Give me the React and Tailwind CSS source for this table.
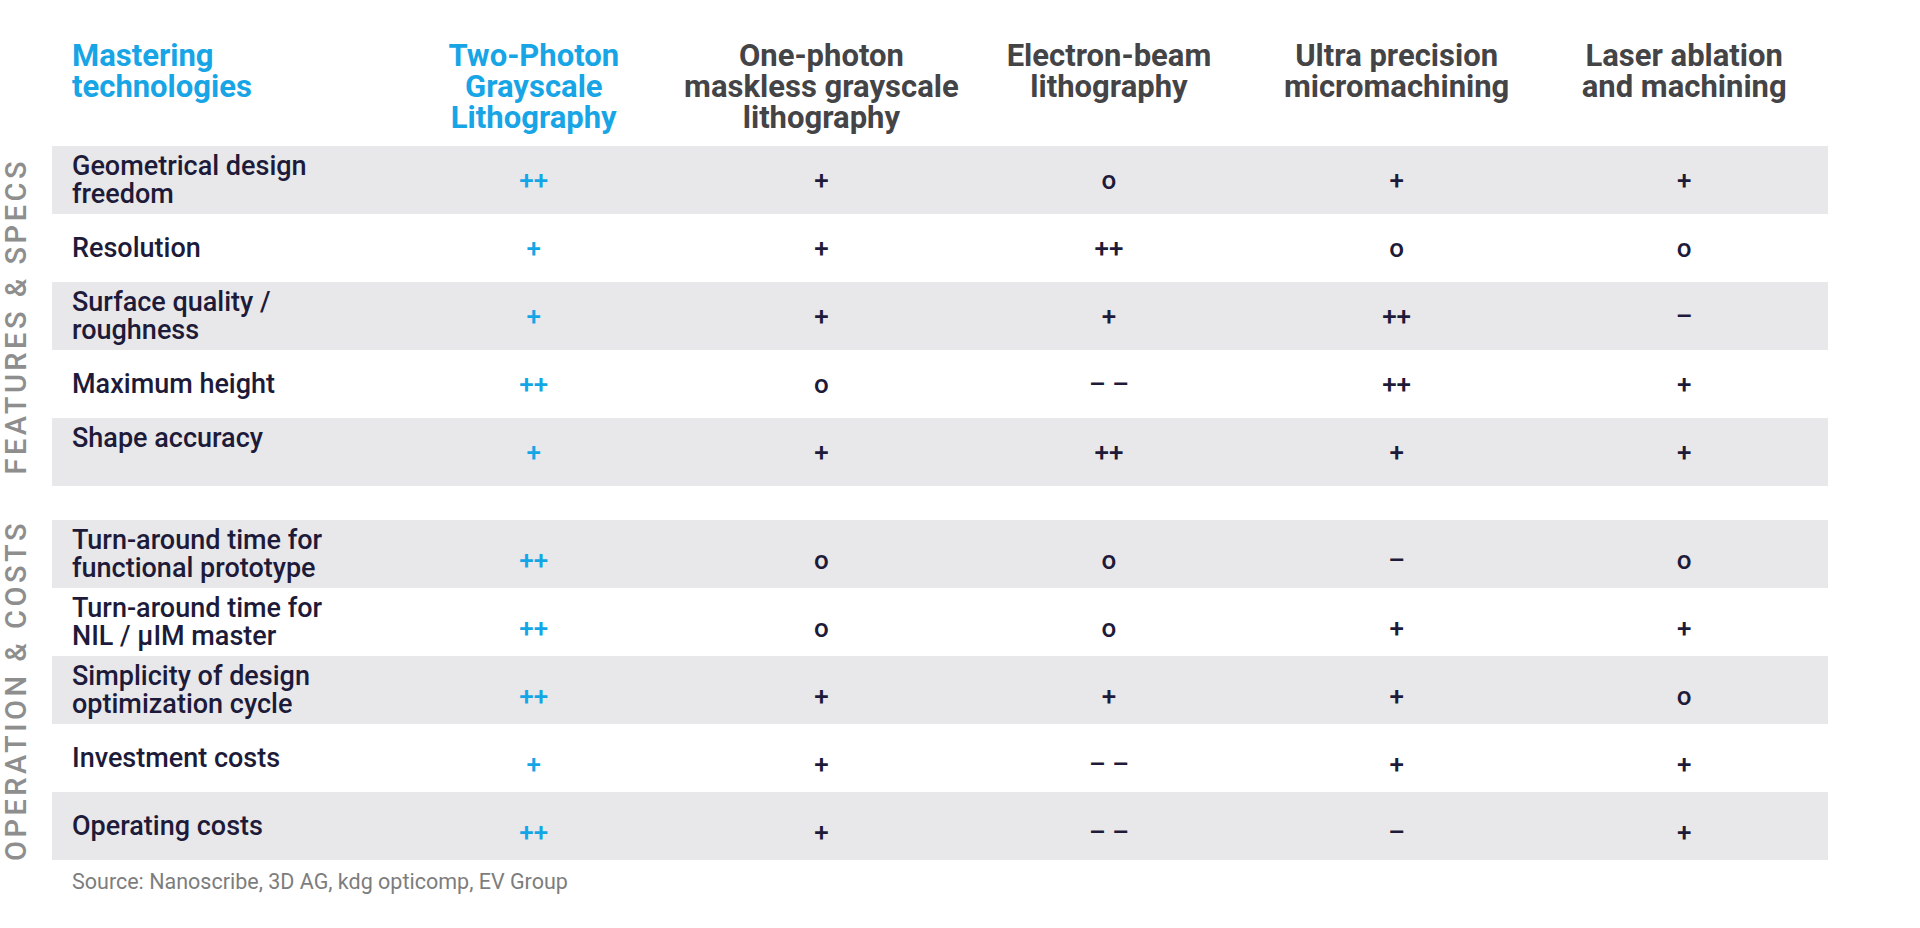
import React from "react";

const COLUMNS = [
    { lines: ["Two-Photon", "Grayscale", "Lithography"], accent: true },
    { lines: ["One-photon", "maskless grayscale", "lithography"] },
    { lines: ["Electron-beam", "lithography"] },
    { lines: ["Ultra precision", "micromachining"] },
    { lines: ["Laser ablation", "and machining"] },
];

const FEATURES = [
    { label: ["Geometrical design", "freedom"], values: ["++", "+", "o", "+", "+"] },
    { label: ["Resolution"], values: ["+", "+", "++", "o", "o"] },
    { label: ["Surface quality /", "roughness"], values: ["+", "+", "+", "++", "–"] },
    { label: ["Maximum height"], values: ["++", "o", "– –", "++", "+"] },
    { label: ["Shape accuracy"], values: ["+", "+", "++", "+", "+"], raised: true },
];

const OPERATION = [
    { label: ["Turn-around time for", "functional prototype"], values: ["++", "o", "o", "–", "o"] },
    { label: ["Turn-around time for", "NIL / µIM master"], values: ["++", "o", "o", "+", "+"] },
    { label: ["Simplicity of design", "optimization cycle"], values: ["++", "+", "+", "+", "o"] },
    { label: ["Investment costs"], values: ["+", "+", "– –", "+", "+"] },
    { label: ["Operating costs"], values: ["++", "+", "– –", "–", "+"] },
];

function Section({ title, rows, lowValues }) {
    return (
        <div className="flex">
            {/* Rotated side label */}
            <div className="w-[52px] shrink-0 flex items-center">
                <span className="ml-[2px] [writing-mode:vertical-rl] rotate-180 text-[29px] leading-none tracking-[3.5px] font-medium text-[#8e8e8e] whitespace-nowrap">
                    {title}
                </span>
            </div>

            <div className="w-[1776px] flex flex-col">
                {rows.map((row, idx) => (
                    <div
                        key={idx}
                        className={`grid grid-cols-[338px_repeat(5,1fr)] h-[68px] ${idx % 2 === 0 ? "bg-[#e8e7e9]" : "bg-white"}`}
                    >
                        <div className={`flex flex-col justify-center pl-[20px] text-[27px] leading-[28px] font-medium text-[#1d1b39] ${row.raised ? "pb-[28px]" : ""}`}>
                            {row.label.map((line) => (
                                <span key={line} className="whitespace-nowrap">{line}</span>
                            ))}
                        </div>
                        {row.values.map((v, i) => (
                            <div
                                key={i}
                                className={`flex items-center justify-center text-[26px] font-medium whitespace-pre ${lowValues ? "pt-3" : ""} ${i === 0 ? "text-[#13a6e6]" : "text-[#1d1b39]"}`}
                            >
                                {v}
                            </div>
                        ))}
                    </div>
                ))}
            </div>
        </div>
    );
}

export default function App() {
    return (
        <div className="min-h-screen w-[1920px] bg-white font-['Roboto',sans-serif] pt-[40px]">
            {/* Column headers */}
            <div className="flex">
                <div className="w-[52px] shrink-0" />
                <div className="w-[1776px] grid grid-cols-[338px_repeat(5,1fr)] h-[106px] text-[31px] leading-[31px] font-bold">
                    <div className="pl-[20px] text-[#17a5e6] flex flex-col">
                        <span>Mastering</span>
                        <span>technologies</span>
                    </div>
                    {COLUMNS.map((col) => (
                        <div
                            key={col.lines[0]}
                            className={`flex flex-col items-center text-center ${col.accent ? "text-[#17a5e6]" : "text-[#444447]"}`}
                        >
                            {col.lines.map((line) => (
                                <span key={line} className="whitespace-nowrap">{line}</span>
                            ))}
                        </div>
                    ))}
                </div>
            </div>

            <Section title="FEATURES & SPECS" rows={FEATURES} />

            <div className="h-[34px]" />

            <Section title="OPERATION & COSTS" rows={OPERATION} lowValues />

            {/* Footnote */}
            <p className="pl-[72px] mt-[9px] text-[21.5px] leading-[24px] text-[#7d7d7d]">
                Source: Nanoscribe, 3D AG, kdg opticomp, EV Group
            </p>
        </div>
    );
}
